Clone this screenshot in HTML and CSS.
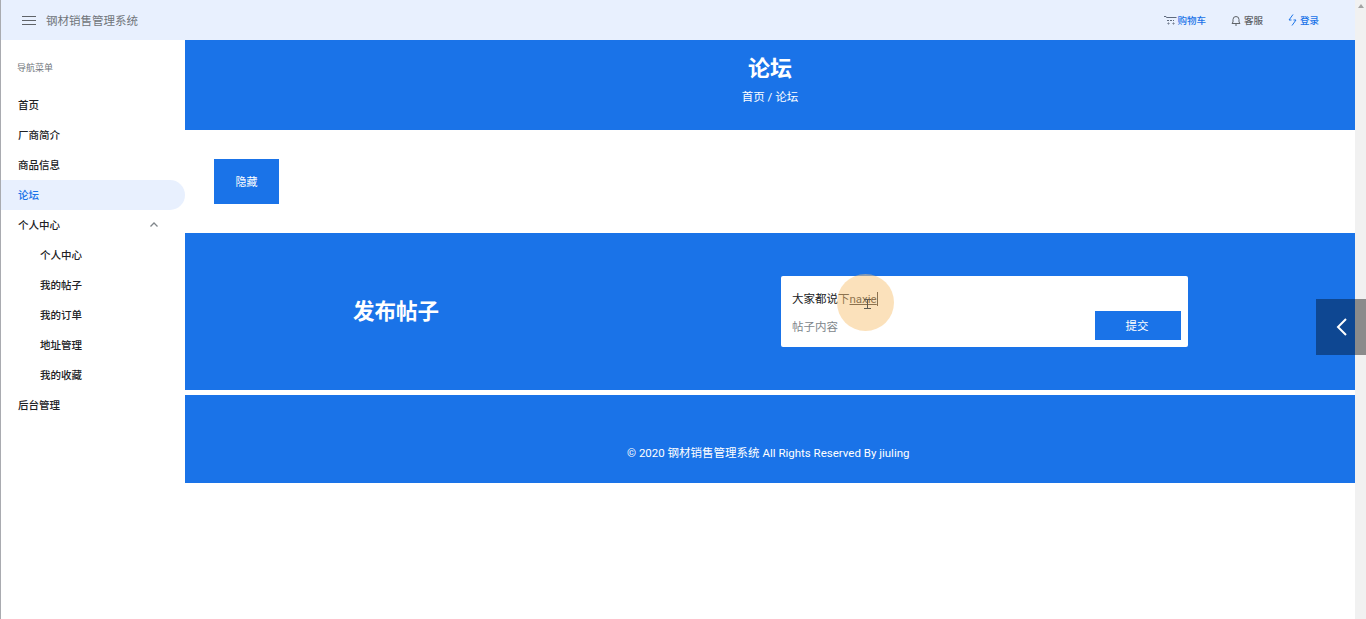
FILE: index.html
```html
<!DOCTYPE html>
<html lang="zh-CN">
<head>
    <meta charset="UTF-8">
    <title>钢材销售管理系统</title>
    <link rel="stylesheet" href="styles.css">
</head>
<body>
    <div class="window">
        <div class="topbar">
            <div class="menu-icon"><div></div><div></div><div></div></div>
            <span class="brand">钢材销售管理系统</span>
            <div class="top-links">
                <a class="top-link blue cart">
                    <svg width="13" height="10" viewBox="0 0 13 10" fill="none" stroke="#5f6a7d" stroke-width="1"><path d="M0 1.500h2l.5 1h10"/><path d="M3 5.500h7" stroke-dasharray="2 1"/><circle cx="4.500" cy="8.500" r=".6"/><circle cx="9.500" cy="8.500" r=".6"/></svg>
                    购物车
                </a>
                <a class="top-link">
                    <svg width="10" height="11" viewBox="0 0 10 11" fill="none" stroke="#5f6368" stroke-width="1"><path d="M1 8.500h8l-1-1.500V4.500a3 3 0 0 0-6 0V7z"/><path d="M4 10h2"/></svg>
                    客服
                </a>
                <a class="top-link blue">
                    <svg width="9" height="12" viewBox="0 0 9 12" fill="none" stroke="#1a73e8" stroke-width="1"><path d="M5 .5L1 6h2.500"/><path d="M4 11.500L8 6H5.500"/></svg>
                    登录
                </a>
            </div>
        </div>
        <div class="content">
            <div class="sidebar">
                <div class="nav-title">导航菜单</div>
                <a class="nav-item">首页</a>
                <a class="nav-item">厂商简介</a>
                <a class="nav-item">商品信息</a>
                <a class="nav-item active">论坛</a>
                <a class="nav-item">
                    个人中心
                    <svg class="chevron" width="8" height="5" viewBox="0 0 8 5" fill="none" stroke="#80868b" stroke-width="1.300"><path d="M.5 4.500L4 1l3.500 3.500"/></svg>
                </a>
                <a class="nav-item sub">个人中心</a>
                <a class="nav-item sub">我的帖子</a>
                <a class="nav-item sub">我的订单</a>
                <a class="nav-item sub">地址管理</a>
                <a class="nav-item sub">我的收藏</a>
                <a class="nav-item">后台管理</a>
            </div>
            <div class="main">
                <div class="hero">
                    <h1>论坛</h1>
                    <div class="crumbs">首页 / 论坛</div>
                </div>
                <div class="toolbar">
                    <button class="hide-btn">隐藏</button>
                </div>
                <div class="post-band">
                    <h2>发布帖子</h2>
                    <div class="post-card">
                        <div class="post-title">大家都说下<span class="typing">naxie</span></div>
                        <div class="post-row">
                            <span class="placeholder">帖子内容</span>
                            <button class="submit-btn">提交</button>
                        </div>
                        <div class="click-spot">
                            <svg class="ibeam" width="7" height="10" viewBox="0 0 7 10" fill="none" stroke="#5f5a50" stroke-width="1"><path d="M0 .5h7M3.500 .5v9M0 9.500h7"/></svg>
                        </div>
                    </div>
                </div>
                <div class="footer">© 2020 钢材销售管理系统 All Rights Reserved By jiuling</div>
            </div>
        </div>
        <div class="side-toggle">
            <svg width="14" height="20" viewBox="0 0 14 20" fill="none" stroke="#fff" stroke-width="2"><path d="M11 2L3 10l8 8"/></svg>
        </div>
    </div>
    <div class="scrollbar"><div class="arrow"></div></div>
</body>
</html>
```
FILE: styles.css
```css
body {
    margin: 0;
    height: 619px;
    overflow: hidden;
    display: flex;
    background-color: #fff;
    font-family: Roboto, "Noto Sans CJK SC", sans-serif;
    color: #202124;
}
.window {
    position: relative;
    flex: 1;
    min-width: 0;
    border-left: 1px solid #a9abb0;
}
.scrollbar {
    width: 11px;
    background-color: #f1f1f1;
}
.scrollbar .arrow {
    width: 0;
    height: 0;
    margin: 4px auto 0;
    border-left: 3px solid transparent;
    border-right: 3px solid transparent;
    border-bottom: 4px solid #a3a3a3;
}
.topbar {
    height: 40px;
    box-sizing: border-box;
    display: flex;
    align-items: center;
    padding: 0 36px 0 21px;
    background-color: #e8f0fe;
}
.menu-icon {
    margin-right: 10px;
}
.menu-icon div {
    width: 14px;
    height: 1px;
    background-color: #5f6368;
    margin: 3px 0;
}
.brand {
    font-size: 11.500px;
    color: #70757a;
}
.top-links {
    margin-left: auto;
    display: flex;
    gap: 25px;
}
.top-link {
    display: flex;
    align-items: center;
    gap: 3px;
    font-size: 9.500px;
    font-weight: 500;
    color: #5f6368;
}
.top-link.blue {
    color: #1a73e8;
}
.top-link.cart {
    gap: 0;
}
.content {
    display: flex;
}
.sidebar {
    width: 184px;
    flex-shrink: 0;
    padding-top: 21px;
}
.nav-title {
    padding-left: 16px;
    font-size: 9px;
    line-height: 15px;
    color: #70757a;
    margin-bottom: 14px;
}
.nav-item {
    height: 30px;
    box-sizing: border-box;
    display: flex;
    align-items: center;
    justify-content: space-between;
    padding: 0 27px 2px 17px;
    font-size: 10.500px;
    font-weight: 500;
}
.nav-item.sub {
    padding-left: 39px;
}
.nav-item.active {
    background-color: #e8f0fe;
    color: #1a73e8;
    border-radius: 0 15px 15px 0;
}
.main {
    flex: 1;
    min-width: 0;
}
.hero {
    height: 90px;
    padding-top: 15px;
    box-sizing: border-box;
    background-color: #1a73e8;
    color: #fff;
    text-align: center;
}
.hero h1 {
    margin: 0;
    font-size: 22px;
    line-height: 28px;
}
.crumbs {
    margin-top: 6px;
    font-size: 11.500px;
    line-height: 16px;
}
.toolbar {
    height: 103px;
    box-sizing: border-box;
    padding: 29px 29px 0;
}
.hide-btn {
    display: block;
    width: 65px;
    height: 45px;
    padding: 0 0 2px;
    border: none;
    background-color: #1a73e8;
    color: #fff;
    font-family: inherit;
    font-size: 11px;
}
.post-band {
    height: 157px;
    display: flex;
    align-items: center;
    background-color: #1a73e8;
    margin-bottom: 5px;
}
.post-band h2 {
    width: 422px;
    margin: 0 174px 4px 0;
    text-align: center;
    font-size: 21.500px;
    color: #fff;
}
.post-card {
    position: relative;
    width: 407px;
    height: 71px;
    box-sizing: border-box;
    background-color: #fff;
    border-radius: 2px;
    padding: 14px 7px 0 11px;
}
.post-title {
    font-size: 11.500px;
    line-height: 18px;
}
.typing {
    text-decoration: underline;
    border-right: 1px solid #202124;
}
.post-row {
    display: flex;
    align-items: center;
    justify-content: space-between;
    margin-top: 3px;
}
.placeholder {
    font-size: 11.500px;
    color: #80868b;
}
.submit-btn {
    width: 86px;
    height: 29px;
    padding: 0 2px 2px 0;
    border: none;
    background-color: #1a73e8;
    color: #fff;
    font-family: inherit;
    font-size: 11.500px;
}
.click-spot {
    position: absolute;
    left: 56px;
    top: -2px;
    width: 57px;
    height: 57px;
    border-radius: 50%;
    background-color: rgba(247, 196, 120, 0.5);
}
.ibeam {
    position: absolute;
    left: 27px;
    top: 25px;
}
.footer {
    height: 88px;
    box-sizing: border-box;
    padding: 50px 0 0 442px;
    background-color: #1a73e8;
    color: #fff;
    font-size: 11.500px;
    line-height: 16px;
}
.side-toggle {
    position: absolute;
    top: 299px;
    right: -11px;
    width: 50px;
    height: 56px;
    display: flex;
    align-items: center;
    padding-left: 19px;
    box-sizing: border-box;
    background: linear-gradient(90deg, #0e4792 39px, #8b8b8b 39px);
}
```
